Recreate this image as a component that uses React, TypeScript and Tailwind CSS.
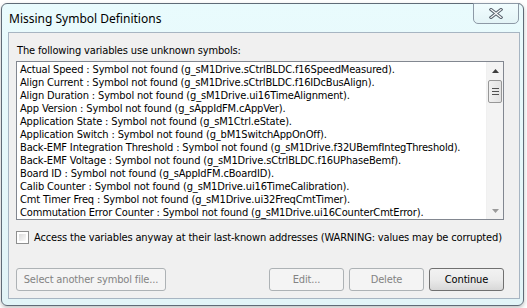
const rows = [
  "Actual Speed : Symbol not found (g_sM1Drive.sCtrlBLDC.f16SpeedMeasured).",
  "Align Current : Symbol not found (g_sM1Drive.sCtrlBLDC.f16IDcBusAlign).",
  "Align Duration : Symbol not found (g_sM1Drive.ui16TimeAlignment).",
  "App Version : Symbol not found (g_sAppIdFM.cAppVer).",
  "Application State : Symbol not found (g_sM1Ctrl.eState).",
  "Application Switch : Symbol not found (g_bM1SwitchAppOnOff).",
  "Back-EMF Integration Threshold : Symbol not found (g_sM1Drive.f32UBemfIntegThreshold).",
  "Back-EMF Voltage : Symbol not found (g_sM1Drive.sCtrlBLDC.f16UPhaseBemf).",
  "Board ID : Symbol not found (g_sAppIdFM.cBoardID).",
  "Calib Counter : Symbol not found (g_sM1Drive.ui16TimeCalibration).",
  "Cmt Timer Freq : Symbol not found (g_sM1Drive.ui32FreqCmtTimer).",
  "Commutation Error Counter : Symbol not found (g_sM1Drive.ui16CounterCmtError).",
];

const dlgFont =
  "font-['DejaVu_Sans_Condensed','Liberation_Sans',sans-serif] text-[11px] leading-[13px] tracking-[-0.15px]";

function Button({ label, width, disabled }: { label: string; width: string; disabled?: boolean }) {
  return (
    <div
      className={`${width} h-[23px] flex items-center justify-center rounded-[3px] border ${
        disabled
          ? "border-[#adb2b5] bg-[#f4f4f4] text-[#838383]"
          : "border-[#707070] bg-gradient-to-b from-[#f2f2f2] via-[#ebebeb] to-[#d8d8d8] text-black"
      }`}
    >
      {label}
    </div>
  );
}

function Scrollbar() {
  return (
    <div className="w-[17px] h-full flex flex-col bg-[#f3f3f3] border-l border-[#f0f0f0]">
      {/* up arrow */}
      <div className="h-[17px] flex items-center justify-center">
        <svg width="7" height="4" viewBox="0 0 7 4">
          <path d="M3.5 0 L7 4 L0 4 Z" fill="#3d3d3d" />
        </svg>
      </div>
      {/* thumb */}
      <div className="mx-[1px] mt-[1px] h-[23px] rounded-[2px] border border-[#979797] bg-gradient-to-r from-[#f0f0f0] to-[#e2e2e2] flex flex-col items-center justify-center gap-[2px]">
        <div className="w-[7px] h-[1px] bg-[#505050]" />
        <div className="w-[7px] h-[1px] bg-[#505050]" />
        <div className="w-[7px] h-[1px] bg-[#505050]" />
      </div>
      <div className="flex-1" />
      {/* down arrow */}
      <div className="h-[17px] flex items-center justify-center">
        <svg width="7" height="4" viewBox="0 0 7 4">
          <path d="M0 0 L7 0 L3.5 4 Z" fill="#9a9a9a" />
        </svg>
      </div>
    </div>
  );
}

export default function App() {
  return (
    <div className="w-[527px] h-[308px] bg-white overflow-hidden">
      <div className="relative ml-[1px] mt-[3px] w-[523px] h-[303px] rounded-[6px] border border-[#5f6b77] bg-gradient-to-b from-[#e9fbfd] to-[#e2f4f7] pl-[6px] pr-[3px] pb-[6px] shadow-[0_2px_4px_rgba(0,0,0,0.25)]">
        {/* title bar */}
        <div className="h-[28px] flex items-center pl-[1px] pt-[2px] font-['Noto_Sans','Liberation_Sans',sans-serif] text-[12px] text-black">
          Missing Symbol Definitions
        </div>
        <div className="absolute top-[-1px] right-[4px] w-[46px] h-[21px] rounded-b-[5px] border border-[#8d99a6] bg-gradient-to-b from-[#f1fdfe] to-[#e3f3f6] flex items-center justify-center">
          <svg width="14" height="11" viewBox="0 0 14 11">
            <path d="M2 1.5 L12 9.5 M12 1.5 L2 9.5" stroke="#59636e" strokeWidth="3.2" strokeLinecap="square" />
            <path d="M2 1.5 L12 9.5 M12 1.5 L2 9.5" stroke="#ffffff" strokeWidth="1.2" strokeLinecap="square" />
          </svg>
        </div>

        {/* client area */}
        <div className={`w-[512px] h-[267px] border border-[#a7b5c2] bg-[#f0f0f0] pl-[7px] flex flex-col ${dlgFont} text-black`}>
          <div className="mt-[11px] pl-[1px]">The following variables use unknown symbols:</div>

          <div className="mt-[4px] w-[488px] h-[159px] border border-[#828790] bg-white flex">
            <div className="flex-1 overflow-hidden pl-[3px] pt-[1px]">
              {rows.map((r) => (
                <div key={r} className="whitespace-nowrap h-[13px]">
                  {r}
                </div>
              ))}
            </div>
            <Scrollbar />
          </div>

          <div className="mt-[11px] flex items-center h-[13px]">
            <div className="w-[13px] h-[13px] border border-[#8e8f8f] bg-white p-[2px]">
              <div className="w-full h-full bg-gradient-to-br from-[#dcdcdc] to-[#fbfbfb]" />
            </div>
            <span className="ml-[5px] whitespace-nowrap">
              Access the variables anyway at their last-known addresses (WARNING: values may be corrupted)
            </span>
          </div>

          <div className="mt-[24px] w-[488px] flex justify-between">
            <Button label="Select another symbol file..." width="w-[150px]" disabled />
            <div className="flex gap-[5px]">
              <Button label="Edit..." width="w-[75px]" disabled />
              <Button label="Delete" width="w-[75px]" disabled />
              <Button label="Continue" width="w-[75px]" />
            </div>
          </div>
        </div>
      </div>
    </div>
  );
}
